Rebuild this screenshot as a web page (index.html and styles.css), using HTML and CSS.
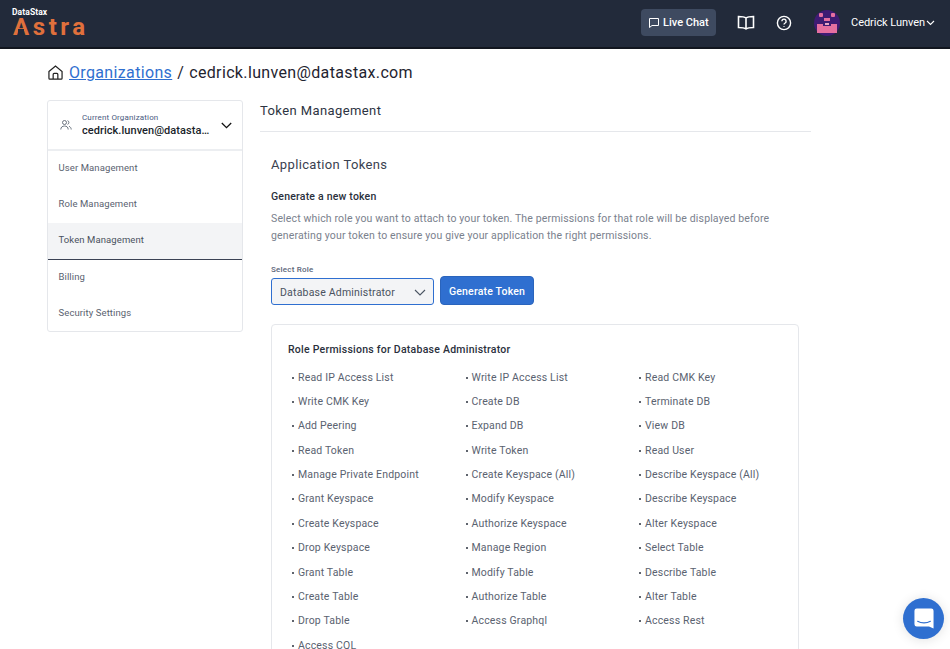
FILE: index.html
```html
<!DOCTYPE html>
<html lang="en">
<head>
<meta charset="utf-8">
<title>Token Management</title>
<link rel="stylesheet" href="styles.css">
</head>
<body>
<header class="topbar">
  <div class="logo">
    <span class="logo-top">DataStax</span>
    <span class="logo-main">Astra</span>
  </div>
  <div class="top-actions">
    <button class="chat-btn">
      <svg width="12" height="12" viewBox="0 0 12 12" fill="none" stroke="#fff" stroke-width="1"><path d="M1.500 1.500h9v7H4L1.500 10.500z"/></svg>
      <span>Live Chat</span>
    </button>
    <svg class="book" width="18" height="16" viewBox="0 0 18 16" fill="none" stroke="#fff" stroke-width="1.600"><path d="M9 3C7.500 1.800 4 1.500 1.500 1.500v11C4 12.500 7.500 12.800 9 14c1.500-1.200 5-1.500 7.500-1.500v-11C14 1.500 10.500 1.800 9 3zM9 3v11"/></svg>
    <svg class="help" width="16" height="16" viewBox="0 0 16 16" fill="none" stroke="#fff" stroke-width="1.400"><circle cx="8" cy="8" r="6.600"/><path d="M5.900 6.200a2.100 2.100 0 1 1 3.200 1.800C8.400 8.400 8 8.800 8 9.600"/><path d="M8 11.200v.9"/></svg>
    <svg class="avatar" width="26" height="26" viewBox="0 0 26 26"><circle cx="13" cy="13" r="13" fill="#3f1b73"/><rect x="5" y="3" width="4" height="4" rx="1" fill="#e56fa0"/><rect x="17" y="3" width="4" height="4" rx="1" fill="#e56fa0"/><rect x="10" y="8" width="6" height="3" fill="#e56fa0"/><rect x="3" y="14" width="20" height="9" fill="#e56fa0"/><rect x="9" y="12" width="8" height="4" fill="#3f1b73"/><rect x="11" y="13" width="4" height="2" fill="#e9a7c4"/></svg>
    <div class="user">
      <span>Cedrick Lunven</span>
      <svg width="9" height="6" viewBox="0 0 9 6" fill="none" stroke="#fff" stroke-width="1.100"><path d="M1 1l3.500 3.500L8 1"/></svg>
    </div>
  </div>
</header>

<div class="breadcrumb">
  <svg class="home" width="15" height="15" viewBox="0 0 16 16" fill="none" stroke="#222" stroke-width="1.300"><path d="M1 7L8 1l7 6v7a1 1 0 0 1-1 1H2a1 1 0 0 1-1-1z"/><path d="M5.500 15v-5a1 1 0 0 1 1-1h3a1 1 0 0 1 1 1v5"/></svg>
  <a href="#" class="crumb-link">Organizations</a>
  <span class="crumb-sep">/</span>
  <span>cedrick.lunven@datastax.com</span>
</div>

<div class="layout">
  <aside class="sidebar">
    <div class="org">
      <svg class="org-icon" width="12" height="12" viewBox="0 0 12 12" fill="none" stroke="#4b5563" stroke-width=".8"><circle cx="4.500" cy="3.500" r="2"/><path d="M.8 10.500c0-2.200 1.500-3.500 3.700-3.500s3.700 1.300 3.700 3.500"/><path d="M7.500 1.600a2 2 0 0 1 0 3.800M9 7.300c1.300.5 2.200 1.600 2.200 3.200"/></svg>
      <div class="org-text">
        <div class="org-label">Current Organization</div>
        <div class="org-name">cedrick.lunven@datastax.com</div>
      </div>
      <svg width="11" height="7" viewBox="0 0 11 7" fill="none" stroke="#111" stroke-width="1.300"><path d="M.8 1l4.700 4.700L10.200 1"/></svg>
    </div>
    <nav>
      <a class="nav-item" href="#">User Management</a>
      <a class="nav-item" href="#">Role Management</a>
      <a class="nav-item active" href="#">Token Management</a>
      <a class="nav-item" href="#">Billing</a>
      <a class="nav-item" href="#">Security Settings</a>
    </nav>
  </aside>

  <main class="content">
    <div class="page-title">Token Management</div>
    <div class="panel">
      <h2 class="section-title">Application Tokens</h2>
      <h3 class="sub-title">Generate a new token</h3>
      <p class="desc">Select which role you want to attach to your token. The permissions for that role will be displayed before generating your token to ensure you give your application the right permissions.</p>
      <label class="role-label">Select Role</label>
      <div class="role-row">
        <div class="select">
          <span>Database Administrator</span>
          <svg width="12" height="7" viewBox="0 0 12 7" fill="none" stroke="#4b5563" stroke-width="1.100"><path d="M1 1l5 5 5-5"/></svg>
        </div>
        <button class="generate">Generate Token</button>
      </div>
      <section class="perm-card">
        <h4 class="perm-title">Role Permissions for Database Administrator</h4>
        <ul class="perm-grid">
          <li>Read IP Access List</li><li>Write IP Access List</li><li>Read CMK Key</li>
          <li>Write CMK Key</li><li>Create DB</li><li>Terminate DB</li>
          <li>Add Peering</li><li>Expand DB</li><li>View DB</li>
          <li>Read Token</li><li>Write Token</li><li>Read User</li>
          <li>Manage Private Endpoint</li><li>Create Keyspace (All)</li><li>Describe Keyspace (All)</li>
          <li>Grant Keyspace</li><li>Modify Keyspace</li><li>Describe Keyspace</li>
          <li>Create Keyspace</li><li>Authorize Keyspace</li><li>Alter Keyspace</li>
          <li>Drop Keyspace</li><li>Manage Region</li><li>Select Table</li>
          <li>Grant Table</li><li>Modify Table</li><li>Describe Table</li>
          <li>Create Table</li><li>Authorize Table</li><li>Alter Table</li>
          <li>Drop Table</li><li>Access Graphql</li><li>Access Rest</li>
          <li>Access CQL</li>
        </ul>
      </section>
    </div>
  </main>
</div>

<button class="intercom" aria-label="Open chat">
  <svg width="20" height="23" viewBox="0 0 22 24"><path d="M3 1h16a2.500 2.500 0 0 1 2.500 2.500V23l-5-2.200H3A2.500 2.500 0 0 1 .5 18.300V3.500A2.500 2.500 0 0 1 3 1z" fill="#fff"/><path d="M4 15c4 2.400 10 2.400 14 0" fill="none" stroke="#2f6fd0" stroke-width="1.200" stroke-linecap="round"/></svg>
</button>
</body>
</html>
```
FILE: styles.css
```css
* { box-sizing: border-box; }
html, body { margin: 0; height: 649px; overflow: hidden; }
body { font-family: Roboto, "Liberation Sans", sans-serif; background: #fff; color: #1f2430; }

.topbar { height: 49px; background: #222a3a; border-bottom: 2px solid #12161f; display: flex; justify-content: space-between; align-items: center; padding: 0 15px 2px 12px; }
.logo { display: flex; flex-direction: column; margin-top: 1px; }
.logo-top { font-size: 8.500px; font-weight: 700; color: #fff; line-height: 9px; letter-spacing: .1px; }
.logo-main { position: relative; font-size: 24px; font-weight: 700; color: #e0703c; line-height: 21px; letter-spacing: 3.600px; margin-left: 1px; }
.logo-main::after { content: ""; position: absolute; left: 5px; top: 12px; width: 6px; height: 4px; background: #222a3a; }
.top-actions { display: flex; align-items: center; }
.chat-btn { display: flex; align-items: center; gap: 3px; width: 75px; height: 27px; background: #3e4a60; border: 0; border-radius: 4px; color: #fff; font: 500 11px Roboto, sans-serif; padding: 0 0 0 7px; }
.book { margin-left: 21px; }
.help { margin-left: 21px; }
.avatar { margin-left: 22px; }
.user { display: flex; align-items: center; gap: 1px; margin-left: 11px; color: #fff; font-size: 11px; font-weight: 400; letter-spacing: -.05px; }

.breadcrumb { display: flex; align-items: center; margin: 14px 0 0 47px; font-size: 16px; height: 19px; color: #1f2430; letter-spacing: .35px; }
.home { margin-left: 1px; }
.crumb-link { margin-left: 6px; color: #2f6fd0; text-decoration: underline; }
.crumb-sep { margin: 0 5px; }

.layout { display: flex; margin: 18px 0 0 47px; gap: 17px; align-items: flex-start; }
.sidebar { width: 196px; border: 1px solid #e5e7eb; border-radius: 3px; background: #fff; }
.org { height: 50px; display: flex; align-items: center; padding: 0 10px 0 12px; border-bottom: 2px solid #eceef1; }
.org-icon { flex: none; }
.org-text { margin-left: 10px; width: 128px; margin-right: 11px; }
.org-label { font-size: 8px; line-height: 10px; color: #4a5a80; letter-spacing: .15px; }
.org-name { font-size: 11px; line-height: 14px; margin-top: 1px; font-weight: 500; white-space: nowrap; overflow: hidden; text-overflow: ellipsis; color: #1a1f2b; letter-spacing: .05px; }
.nav-item { display: block; height: 36px; line-height: 34px; padding-left: 10.500px; font-size: 9.500px; color: #5a6270; text-decoration: none; letter-spacing: .1px; }
.nav-item.active { height: 37px; background: #f3f4f6; border-bottom: 1px solid #3a4254; color: #4a5260; }
.nav-item:last-child { height: 35px; }

.content { width: 551px; }
.page-title { height: 32px; font-size: 13px; font-weight: 400; color: #2d3442; border-bottom: 1px solid #e5e7eb; padding-top: 3px; letter-spacing: .4px; }
.panel { padding: 0 11px; }
.section-title { margin: 24px 0 0; font-size: 13px; font-weight: 400; line-height: 17px; color: #3a4150; letter-spacing: .35px; }
.sub-title { margin: 17px 0 0; font-size: 10.500px; font-weight: 500; line-height: 14px; color: #2a303c; letter-spacing: .2px; }
.desc { margin: 6px 0 0; width: 510px; font-size: 10.500px; line-height: 17px; color: #7a818d; letter-spacing: .145px; }
.role-label { display: block; margin-top: 21px; font-size: 8px; font-weight: 500; line-height: 10px; color: #5a6478; letter-spacing: .2px; }
.role-row { display: flex; gap: 6px; align-items: flex-end; margin-top: 1px; }
.select { width: 163px; height: 27px; display: flex; justify-content: space-between; align-items: center; background: #f3f4f6; border: 1px solid #2f6fd0; border-radius: 3px; padding: 1px 7px 0 8px; font-size: 10.500px; color: #4a5260; letter-spacing: .2px; }
.generate { width: 94px; height: 29px; background: #2f6fd0; color: #fff; border: 1px solid #2a64bc; border-radius: 4px; font: 500 10.500px Roboto, sans-serif; letter-spacing: .2px; padding: 1px 0 0; }
.perm-card { margin-top: 19px; width: 528px; height: 400px; border: 1px solid #e5e7eb; border-radius: 4px; padding: 18px 16px 0; }
.perm-title { margin: 0; font-size: 10.500px; font-weight: 500; line-height: 14px; color: #2a303c; letter-spacing: .25px; }
.perm-grid { list-style: none; margin: 8.500px 0 0; padding: 0 0 0 4px; display: grid; grid-template-columns: 173.500px 173.500px 1fr; grid-auto-rows: 24.360px; }
.perm-grid li { font-size: 10.500px; line-height: 24px; color: #5a6270; letter-spacing: .17px; white-space: nowrap; display: flex; align-items: center; }
.perm-grid li::before { content: ""; width: 2px; height: 2px; border-radius: 50%; background: #2a303c; margin-right: 4px; flex: none; }

.intercom { position: fixed; left: 903px; top: 598px; width: 41px; height: 41px; border-radius: 50%; background: #2f6fd0; border: 0; padding: 0; display: flex; align-items: center; justify-content: center; box-shadow: 0 1px 12px rgba(0,0,0,.12); }
```
